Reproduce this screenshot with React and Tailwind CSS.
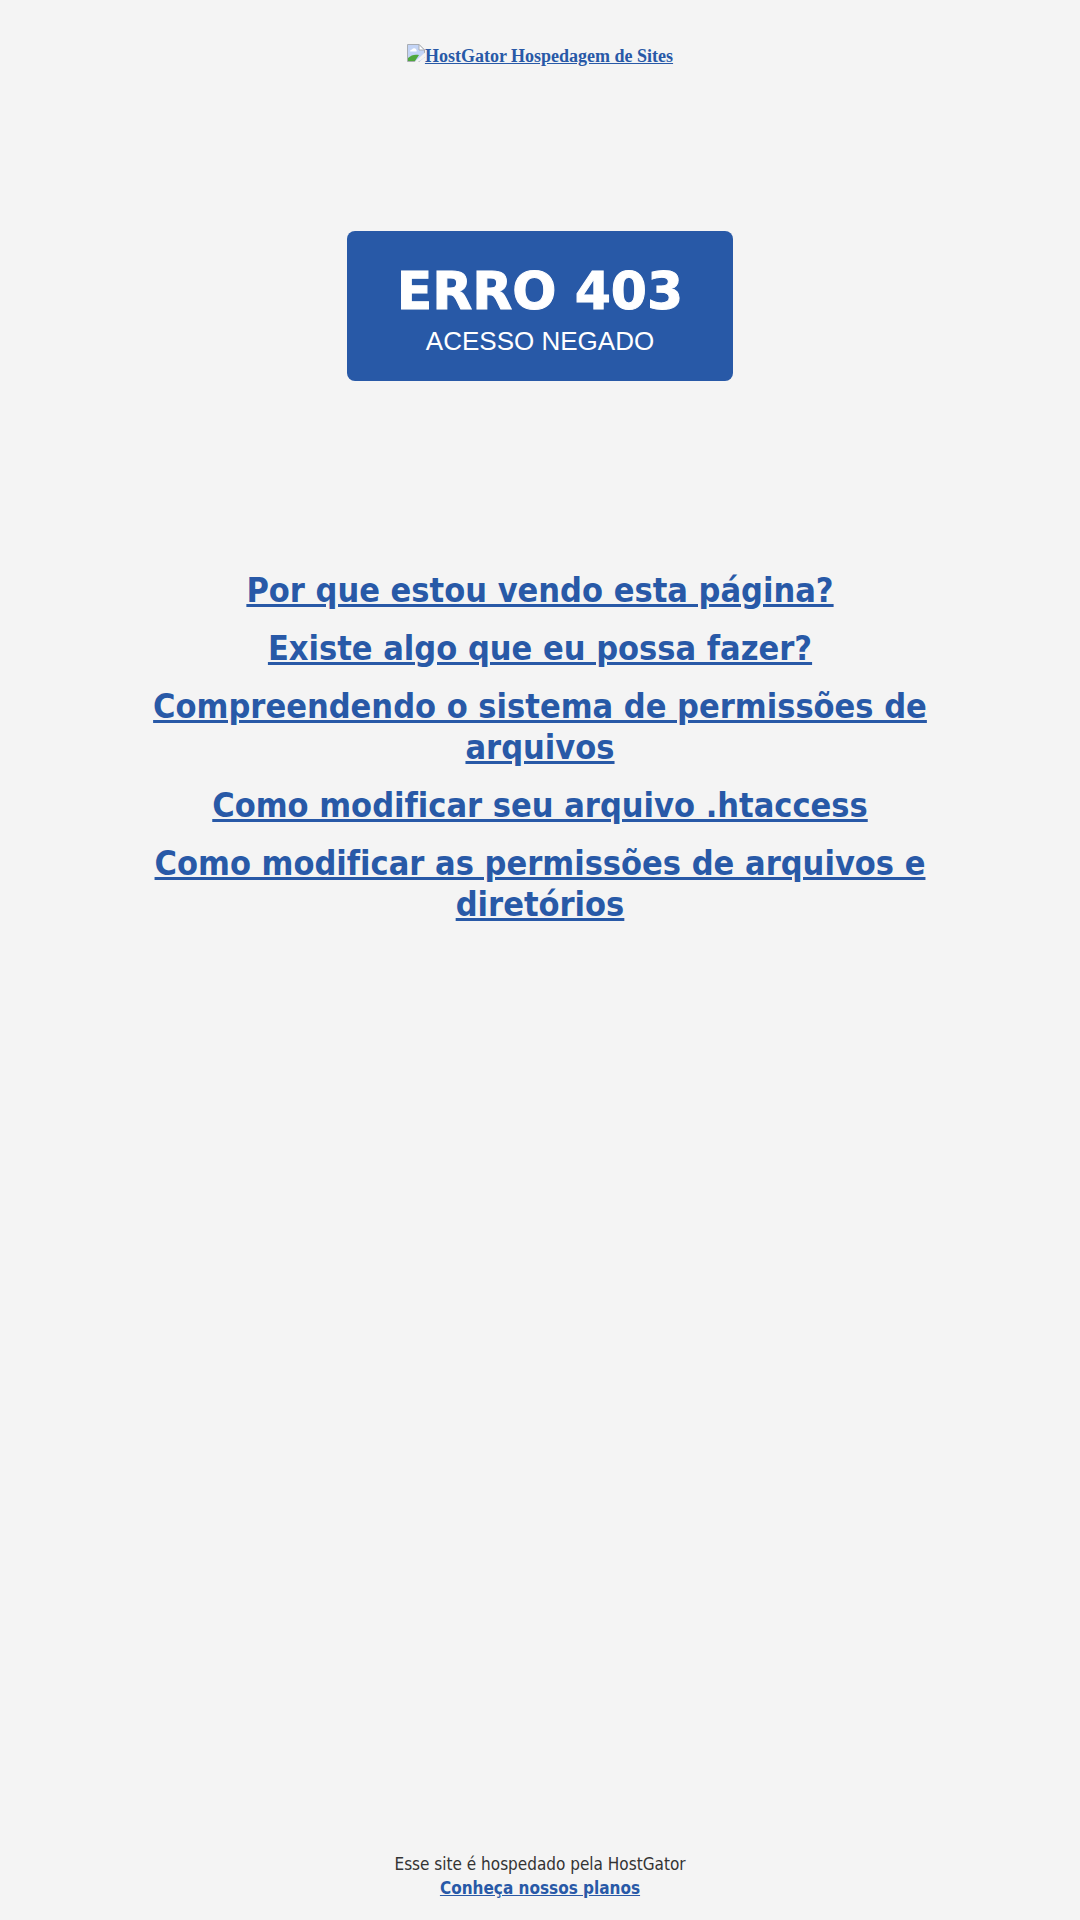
import React from "react";

const ARTICLES = [
  "Por que estou vendo esta página?",
  "Existe algo que eu possa fazer?",
  "Compreendendo o sistema de permissões de arquivos",
  "Como modificar seu arquivo .htaccess",
  "Como modificar as permissões de arquivos e diretórios",
];

// Placeholder shown in front of the logo's alternative text.
function MissingImage() {
  return (
    <svg className="inline-block h-[18px] w-[18px] align-baseline" viewBox="0 0 18 18" aria-hidden="true">
      <path d="M0.5 0.5H12L17.5 6V17.5H0.5Z" fill="#c3d4f6" stroke="#a9adb3" />
      <path d="M3 7.500a2 2 0 0 1 2-2a2.500 2.500 0 0 1 4.500 0.500a1.500 1.500 0 0 1 0 1.500Z" fill="#fff" />
      <path d="M1 17V14C4 11 8 10 12 11L8 17Z" fill="#4fa83d" />
      <path d="M12 0.500V6H17.500Z" fill="#fff" stroke="#a9adb3" />
      <path d="M18 8.500L7.500 18H11L18 13Z" fill="#f4f4f4" />
      <path d="M18 13L12 18H18Z" fill="#f4f4f4" />
    </svg>
  );
}

export default function App() {
  return (
    <div className="flex min-h-screen flex-col bg-[#f4f4f4] text-center">
      <header className="pt-11 font-['Liberation_Serif',serif] text-lg leading-6 font-bold text-[#2859a7]">
        <a href="#" className="underline">
          <MissingImage />
          HostGator Hospedagem de Sites
        </a>
      </header>

      <section className="mx-auto mt-[163px] rounded-lg bg-[#2859a7] px-[50px] pt-[30px] pb-5 text-white">
        <h1 className="font-['DejaVu_Sans',sans-serif] text-[52px] leading-[60px] font-black [-webkit-text-stroke:1px_white]">
          ERRO 403
        </h1>
        <p className="font-['Liberation_Sans',sans-serif] text-[26px] leading-10">ACESSO NEGADO</p>
      </section>

      <main className="px-[120px] pt-[189px] font-['DejaVu_Sans_Condensed','DejaVu_Sans',sans-serif] text-[34px] leading-[41px] font-bold text-[#2859a7] [font-variant-ligatures:none]">
        <ul className="flex flex-col gap-[17px]">
          {ARTICLES.map((title) => (
            <li key={title}>
              <a href="#" className="underline decoration-[3px]">{title}</a>
            </li>
          ))}
        </ul>
      </main>

      <footer className="mt-auto pb-5 font-['DejaVu_Sans_Condensed','DejaVu_Sans',sans-serif] text-[17px] leading-6 text-[#333]">
        <p>Esse site é hospedado pela HostGator</p>
        <a href="#" className="font-bold text-[#2859a7] underline">Conheça nossos planos</a>
      </footer>
    </div>
  );
}
